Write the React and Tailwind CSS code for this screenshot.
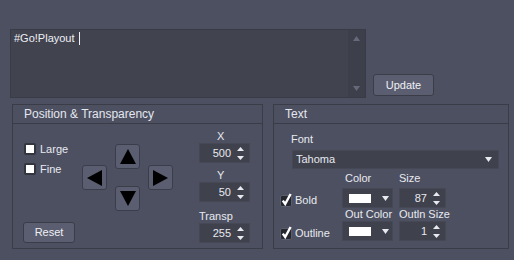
import React from "react";

const font = { fontFamily: '"Liberation Sans", Arial, sans-serif' };

function Tri({ dir, className }) {
    const pts = {
        up: "8,0 16,15 0,15",
        down: "0,0 16,0 8,15",
        left: "15,0 15,16 0,8",
        right: "0,0 15,8 0,16",
    }[dir];
    const vb = dir === "up" || dir === "down" ? "0 0 16 15" : "0 0 15 16";
    return (
        <svg viewBox={vb} className={className}>
            <polygon points={pts} fill="#000" />
        </svg>
    );
}

function ArrowButton({ dir }) {
    const size = dir === "up" || dir === "down" ? "w-[16px] h-[15px]" : "w-[15px] h-[16px]";
    return (
        <div className="w-[25px] h-[25px] flex items-center justify-center bg-[#5b5e70] border border-[#3b3d4a] rounded-[3px]">
            <Tri dir={dir} className={size} />
        </div>
    );
}

function SpinArrows() {
    return (
        <svg viewBox="0 0 7 13" className="w-[7px] h-[13px] shrink-0">
            <polygon points="3.5,0 7,4 0,4" fill="#e8eaf0" />
            <polygon points="0,9 7,9 3.5,13" fill="#e8eaf0" />
        </svg>
    );
}

function SpinBox({ value, w }) {
    return (
        <div className={`${w} h-[20px] flex items-center justify-end gap-[6px] pr-[5px] bg-[#3f414d] border border-[#464856] text-[11px] text-[#e8eaf0]`}>
            <span className="whitespace-nowrap">{value}</span>
            <SpinArrows />
        </div>
    );
}

function DownCaret() {
    return (
        <svg viewBox="0 0 7 5" className="w-[7px] h-[5px]">
            <polygon points="0,0 7,0 3.5,5" fill="#e8eaf0" />
        </svg>
    );
}

function ColorCombo() {
    return (
        <div className="w-[51px] h-[20px] flex items-center pl-[6px] bg-[#3f414d] border border-[#464856]">
            <div className="w-[22px] h-[9px] bg-white" />
            <div className="ml-[11px] flex">
                <DownCaret />
            </div>
        </div>
    );
}

// checked box: dark square with a fat white tick poking out the top
function Checked() {
    return (
        <svg viewBox="0 0 12 14" className="w-[12px] h-[14px] shrink-0">
            <rect x="0.5" y="2.5" width="11" height="11" rx="1.5" fill="#25272f" stroke="#5a5d6c" />
            <path d="M2.8 7.6 L5.2 11 L10.6 1" stroke="#fff" strokeWidth="2.4" fill="none" />
        </svg>
    );
}

function Unchecked({ label }) {
    return (
        <div className="flex items-center gap-[4px] h-[12px]">
            <div className="w-[12px] h-[12px] bg-white border-2 border-[#34363f] rounded-[2px]" />
            <span className="text-[11px] text-[#e8eaf0]">{label}</span>
        </div>
    );
}

function GroupBox({ title, w, children }) {
    return (
        <div className={`${w} h-[145px] border border-[#3a3c48] flex flex-col`}>
            <div className="h-[19px] border-b border-[#3a3c48] flex items-center pl-[11px] text-[12px] text-[#e4e7ef]">
                {title}
            </div>
            <div className="flex-1">{children}</div>
        </div>
    );
}

export default function App() {
    return (
        <div className="w-[514px] h-[260px] bg-[#4d5061] overflow-hidden" style={font}>
            <div className="flex items-end pt-[29px] pl-[10px]">
                <div className="w-[356px] h-[69px] flex bg-[#41434f] border border-[#393b47]">
                    <div className="flex-1 pl-[3px] pt-[1px] text-[11px] text-[#eef0f5] flex items-start">
                        <span className="leading-[14px]">#Go!Playout</span>
                        <span className="ml-[4px] mt-[1px] w-px h-[13px] bg-[#eef0f5]" />
                    </div>
                    <div className="w-[17px] flex flex-col items-center justify-between py-[6px] bg-[#3d3f4a]">
                        <svg viewBox="0 0 7 5" className="w-[7px] h-[5px]">
                            <polygon points="3.5,0 7,5 0,5" fill="#666979" />
                        </svg>
                        <svg viewBox="0 0 7 5" className="w-[7px] h-[5px]">
                            <polygon points="0,0 7,0 3.5,5" fill="#666979" />
                        </svg>
                    </div>
                </div>
                <div className="ml-[7px] mb-[2px] w-[61px] h-[22px] flex items-center justify-center bg-[#5b5e70] border border-[#3a3c48] rounded-[3px] text-[11px] text-[#eef0f5]">
                    Update
                </div>
            </div>

            <div className="flex gap-[10px] pl-[12px] pt-[6px]">
                <GroupBox title="Position & Transparency" w="w-[251px]">
                    <div className="flex h-full">
                        <div className="w-[69px] flex flex-col pl-[10px] pt-[19px]">
                            <div className="pl-[1px] flex flex-col gap-[8px]">
                                <Unchecked label="Large" />
                                <Unchecked label="Fine" />
                            </div>
                            <div className="mt-[47px] w-[52px] h-[21px] flex items-center justify-center bg-[#5b5e70] border border-[#3a3c48] rounded-[3px] text-[11px] text-[#eef0f5]">
                                Reset
                            </div>
                        </div>
                        <div className="w-[117px] flex items-start pt-[20px]">
                            <div className="flex items-center gap-[8px]">
                                <ArrowButton dir="left" />
                                <div className="flex flex-col gap-[17px]">
                                    <ArrowButton dir="up" />
                                    <ArrowButton dir="down" />
                                </div>
                                <ArrowButton dir="right" />
                            </div>
                        </div>
                        <div className="flex flex-col pt-[6px] text-[11px] text-[#e8eaf0]">
                            <div className="h-[13px] leading-[13px] pl-[18px]">X</div>
                            <SpinBox value="500" w="w-[51px]" />
                            <div className="mt-[6px] h-[13px] leading-[13px] pl-[18px]">Y</div>
                            <SpinBox value="50" w="w-[51px]" />
                            <div className="mt-[8px] h-[13px] leading-[13px]">Transp</div>
                            <SpinBox value="255" w="w-[51px]" />
                        </div>
                    </div>
                </GroupBox>

                <GroupBox title="Text" w="w-[236px]">
                    <div className="flex flex-col pt-[8px] text-[11px] text-[#e8eaf0]">
                        <div className="pl-[17px] h-[18px] leading-[14px]">Font</div>
                        <div className="ml-[18px] w-[207px] h-[19px] flex items-center justify-between pl-[3px] pr-[6px] bg-[#3f414d] border border-[#464856]">
                            <span>Tahoma</span>
                            <DownCaret />
                        </div>
                        <div className="flex pl-[6px]">
                            <div className="w-[62px] flex flex-col">
                                <div className="h-[19px]" />
                                <div className="h-[20px] flex items-end gap-[3px] pb-[1px]">
                                    <Checked />
                                    <span className="leading-[13px]">Bold</span>
                                </div>
                                <div className="h-[13px]" />
                                <div className="h-[20px] flex items-end gap-[3px] pb-[1px]">
                                    <Checked />
                                    <span className="leading-[13px]">Outline</span>
                                </div>
                            </div>
                            <div className="w-[51px] flex flex-col">
                                <div className="h-[19px] flex items-center pl-[3px] whitespace-nowrap">Color</div>
                                <ColorCombo />
                                <div className="h-[13px] flex items-center pl-[3px] whitespace-nowrap">Out Color</div>
                                <ColorCombo />
                            </div>
                            <div className="ml-[6px] w-[47px] flex flex-col">
                                <div className="h-[19px] flex items-center whitespace-nowrap">Size</div>
                                <SpinBox value="87" w="w-[47px]" />
                                <div className="h-[13px] flex items-center whitespace-nowrap">Outln Size</div>
                                <SpinBox value="1" w="w-[47px]" />
                            </div>
                        </div>
                    </div>
                </GroupBox>
            </div>
        </div>
    );
}
